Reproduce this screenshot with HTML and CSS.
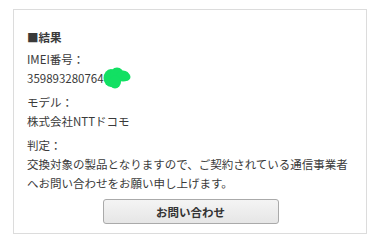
FILE: index.html
```html
<!DOCTYPE html>
<html lang="ja">
<head>
<meta charset="utf-8">
<link rel="stylesheet" href="styles.css">
</head>
<body>
<div class="card">
  <div class="heading">■結果</div>
  <div class="group">
    <div>IMEI番号：</div>
    <div class="imei">359893280764<svg class="blot" width="28" height="24" viewBox="0 0 28 24"><g fill="#12e063"><ellipse cx="8" cy="12" rx="7.5" ry="9"/><ellipse cx="14" cy="9" rx="7" ry="7.5"/><ellipse cx="20" cy="10" rx="6.5" ry="5.5"/><ellipse cx="23" cy="11" rx="4.5" ry="4"/><ellipse cx="12" cy="16" rx="6" ry="6.5"/></g></svg></div>
  </div>
  <div class="group">
    <div>モデル：</div>
    <div>株式会社NTTドコモ</div>
  </div>
  <div class="group">
    <div>判定：</div>
    <div>交換対象の製品となりますので、ご契約されている通信事業者へお問い合わせをお願い申し上げます。</div>
  </div>
  <div class="actions">
    <button class="btn">お問い合わせ</button>
  </div>
</div>
</body>
</html>
```
FILE: styles.css
```css
html, body { margin: 0; padding: 0; background: #fff; }
body {
  font-family: "Noto Sans CJK JP", "Noto Sans", sans-serif;
  font-size: 11.5px;
  line-height: 19px;
  color: #3a3a3a;
}
.card {
  margin: 9px 0 0 13px;
  width: 354px;
  height: 225px;
  box-sizing: border-box;
  border: 1px solid #dcdcdc;
  padding: 18px 12px 0 13px;
}
.heading { font-weight: bold; margin-bottom: 3px; }
.group { margin-bottom: 5px; }
.imei { position: relative; }
.blot { position: absolute; left: 76px; top: -3px; }
.actions { display: flex; justify-content: center; margin-top: 6px; }
.btn {
  width: 176px;
  height: 25px;
  border: 1px solid #aaa;
  border-radius: 3px;
  background: linear-gradient(#f4f4f4, #e6e6e6);
  font-family: "Noto Sans CJK JP", sans-serif;
  font-size: 11.5px;
  font-weight: bold;
  color: #333;
  padding: 0;
}
```
